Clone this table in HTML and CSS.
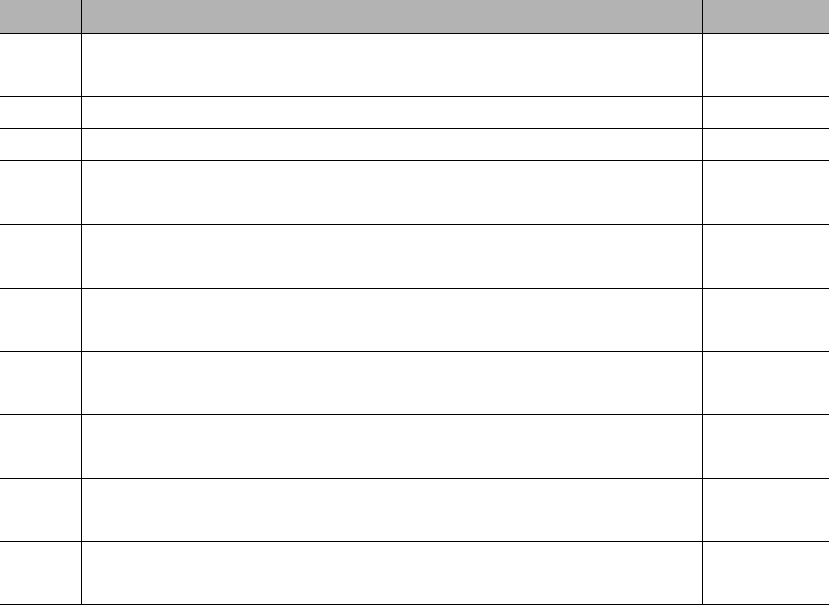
FILE: index.html
```html
<!DOCTYPE html>
<html>
<head>
<meta charset="utf-8">
<link rel="stylesheet" href="styles.css">
</head>
<body>
<div class="grid">
  <div class="cell head"></div><div class="cell head mid"></div><div class="cell head mid"></div>
  <div class="cell r63"></div><div class="cell r63 mid"></div><div class="cell r63 mid"></div>
  <div class="cell r32"></div><div class="cell r32 mid"></div><div class="cell r32 mid"></div>
  <div class="cell r32"></div><div class="cell r32 mid"></div><div class="cell r32 mid"></div>
  <div class="cell r64"></div><div class="cell r64 mid"></div><div class="cell r64 mid"></div>
  <div class="cell r64"></div><div class="cell r64 mid"></div><div class="cell r64 mid"></div>
  <div class="cell r63"></div><div class="cell r63 mid"></div><div class="cell r63 mid"></div>
  <div class="cell r63"></div><div class="cell r63 mid"></div><div class="cell r63 mid"></div>
  <div class="cell r64"></div><div class="cell r64 mid"></div><div class="cell r64 mid"></div>
  <div class="cell r63"></div><div class="cell r63 mid"></div><div class="cell r63 mid"></div>
  <div class="cell r63"></div><div class="cell r63 mid"></div><div class="cell r63 mid"></div>
</div>
</body>
</html>
```
FILE: styles.css
```css
html, body {
  margin: 0;
  padding: 0;
  background: #ffffff;
  font-family: "Liberation Sans", Arial, sans-serif;
}
.grid {
  display: grid;
  grid-template-columns: 81px 621px 1fr;
  width: 829px;
}
.cell {
  box-sizing: border-box;
  border-bottom: 1px solid #000;
}
.mid {
  border-left: 1px solid #000;
}
.head {
  height: 34px;
  background: #b3b3b3;
}
.r63 { height: 63px; }
.r64 { height: 64px; }
.r32 { height: 32px; }
```
